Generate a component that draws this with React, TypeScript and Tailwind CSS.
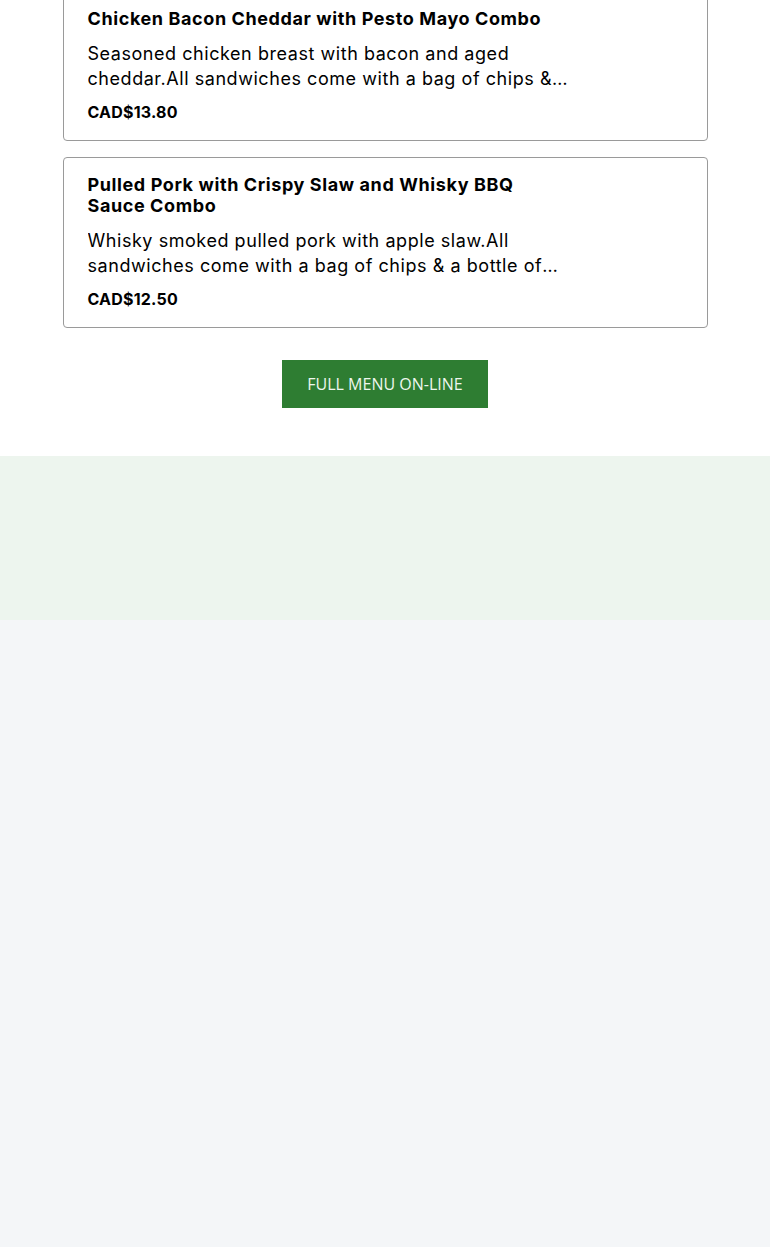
import React from 'react'

type Item = {
  name: string
  description: string
  price: string
}

const items: Item[] = [
  {
    name: 'Chicken Bacon Cheddar with Pesto Mayo Combo',
    description:
      'Seasoned chicken breast with bacon and aged cheddar.All sandwiches come with a bag of chips & a bottle of water or pop.',
    price: 'CAD$13.80',
  },
  {
    name: 'Pulled Pork with Crispy Slaw and Whisky BBQ Sauce Combo',
    description:
      'Whisky smoked pulled pork with apple slaw.All sandwiches come with a bag of chips & a bottle of water or pop.',
    price: 'CAD$12.50',
  },
]

const MenuCard = ({ item }: { item: Item }) => (
  <div className="rounded-[4px] border border-[#9a9a9a] bg-white px-6 pt-4 pb-4">
    <div className="max-w-[482px]">
      <h3 className="text-[18px] font-bold leading-[21.6px] tracking-[0.6px] text-black">{item.name}</h3>
      <p className="mt-[11px] line-clamp-2 text-[18px] leading-[25px] tracking-[0.55px] text-black">
        {item.description}
      </p>
      <div className="mt-[9px] text-[16px] font-bold leading-6 tracking-[0.2px] text-black">{item.price}</div>
    </div>
  </div>
)

export default function App() {
  return (
    <div className="min-h-[1256px] bg-[#f4f6f8] font-['Inter',sans-serif]">
      <section className="bg-white pb-12">
        <div className="mx-auto -mt-[9px] flex w-[645px] flex-col gap-4">
          {items.map((item) => (
            <MenuCard key={item.name} item={item} />
          ))}
        </div>
        <div className="mt-8 flex justify-center">
          <a
            href="#"
            className="flex h-12 w-[206px] items-center justify-center bg-[#2e7d32] font-['Open_Sans',sans-serif] text-[16px] text-[#eef7ee]"
          >
            FULL MENU ON-LINE
          </a>
        </div>
      </section>
      <section className="h-[164px] bg-[#edf5ee]" />
    </div>
  )
}
